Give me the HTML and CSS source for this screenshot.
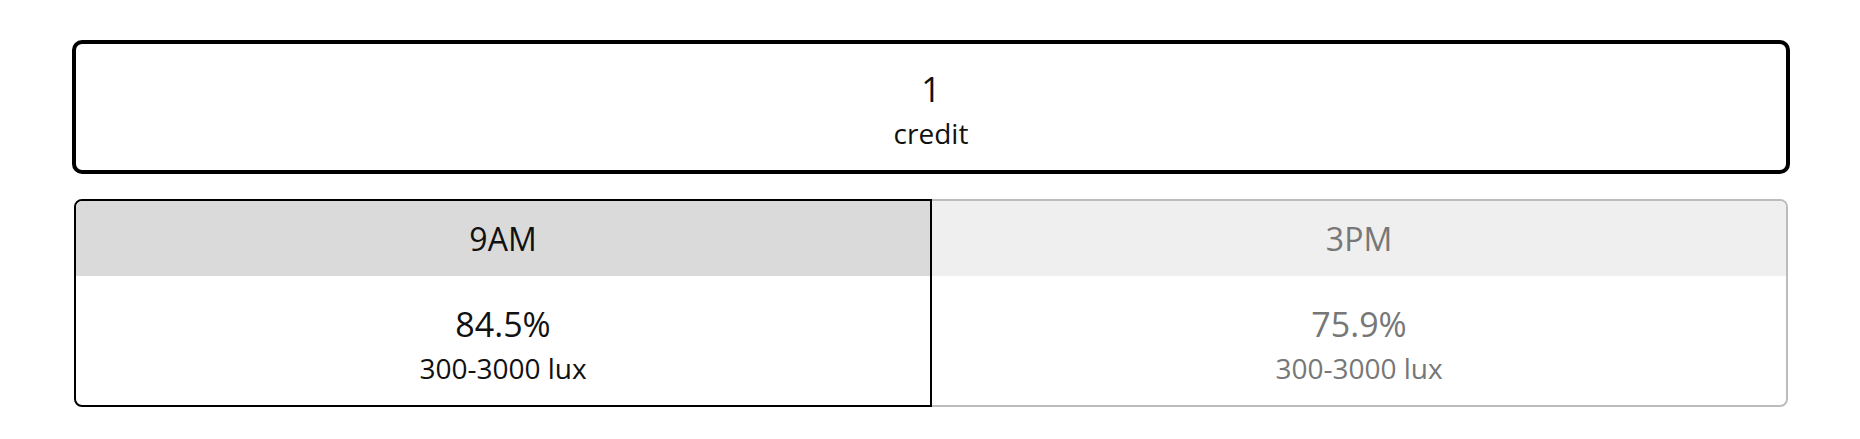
FILE: index.html
```html
<!DOCTYPE html>
<html>
<head>
<meta charset="utf-8">
<link rel="stylesheet" href="styles.css">
</head>
<body>
<div class="wrap">
  <div class="credit-card">
    <div class="big">1</div>
    <div class="small">credit</div>
  </div>
  <div class="slots">
    <div class="slot slot-active">
      <div class="slot-head">9AM</div>
      <div class="slot-body">
        <div class="big">84.5%</div>
        <div class="small">300-3000 lux</div>
      </div>
    </div>
    <div class="slot slot-idle">
      <div class="slot-head">3PM</div>
      <div class="slot-body">
        <div class="big">75.9%</div>
        <div class="small">300-3000 lux</div>
      </div>
    </div>
  </div>
</div>
</body>
</html>
```
FILE: styles.css
```css
html, body {
  margin: 0;
  padding: 0;
  background: #fff;
}
body {
  font-family: "Open Sans", "Noto Sans", "Liberation Sans", sans-serif;
  color: #111;
}
.wrap {
  padding: 40px 70px 0 72px;
  display: flex;
  flex-direction: column;
  gap: 25px;
}
.credit-card {
  height: 126px;
  border: 4px solid #000;
  border-radius: 10px;
  display: flex;
  flex-direction: column;
  align-items: center;
  justify-content: center;
  padding-top: 4px;
  box-sizing: border-box;
  height: 134px;
}
.big {
  font-size: 34px;
  line-height: 48px;
}
.small {
  font-size: 28px;
  line-height: 40px;
}
.slots {
  display: flex;
  margin: 0 2px;
}
.slot {
  flex: 1 1 0;
  display: flex;
  flex-direction: column;
  overflow: hidden;
}
.slot-active {
  border: 2px solid #000;
  border-radius: 8px 0 0 8px;
}
.slot-idle {
  border: 2px solid #bcbcbc;
  border-left: none;
  border-radius: 0 8px 8px 0;
  color: #777;
}
.slot-head {
  height: 75px;
  display: flex;
  align-items: center;
  justify-content: center;
  font-size: 32px;
}
.slot-active .slot-head {
  background: #dadada;
}
.slot-idle .slot-head {
  background: #efefef;
}
.slot-body {
  height: 129px;
  display: flex;
  flex-direction: column;
  align-items: center;
  justify-content: center;
  padding-top: 7px;
  box-sizing: border-box;
}
```
